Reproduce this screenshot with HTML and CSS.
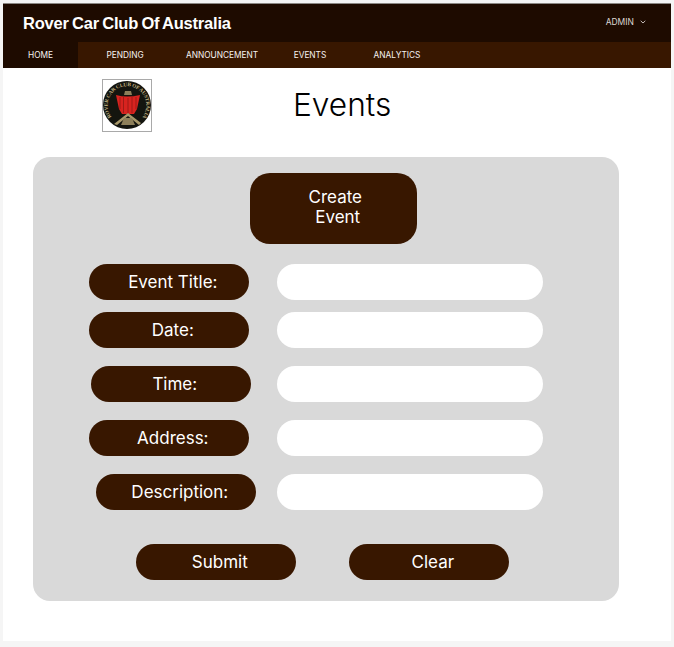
FILE: index.html
```html
<!DOCTYPE html>
<html lang="en">
<head>
<meta charset="utf-8">
<title>Events</title>
<link rel="stylesheet" href="styles.css">
</head>
<body>
<div class="frame">
  <header class="topbar">
    <span class="brand">Rover Car Club Of Australia</span>
    <span class="admin">ADMIN
      <svg class="chev" width="6" height="4" viewBox="0 0 6 4"><path d="M.7.8 3 3 5.300.8" fill="none" stroke="#d8d0cc" stroke-width=".9"/></svg>
    </span>
  </header>
  <nav class="nav">
    <a class="tab tab-home">HOME</a>
    <a class="tab tab-pending">PENDING</a>
    <a class="tab tab-ann">ANNOUNCEMENT</a>
    <a class="tab tab-events">EVENTS</a>
    <a class="tab tab-analytics">ANALYTICS</a>
  </nav>
  <div class="head">
    <div class="logo">
      <svg width="48" height="50" viewBox="0 0 48 50">
        <defs><path id="ring" d="M8.500 37a19.300 19.300 0 1 1 31 0"/></defs>
        <rect width="48" height="50" fill="#fff"/>
        <circle cx="24" cy="25" r="24" fill="#14150f"/>
        <text class="logo-text"><textPath href="#ring" textLength="85">ROVER CAR CLUB OF AUSTRALIA</textPath></text>
        <path d="M13 15q11 3 24 0l-3 14-3 5H19l-3-5z" fill="#d8231f"/>
        <path d="M17 17v12M20.500 17v16M25 18v16M29 17v16M33 17v12" stroke="#8a1712" stroke-width=".7"/>
        <path d="M22 11h6l1 4h-8z" fill="#8d7f5a"/>
        <path d="M11 44 25 33l13 10-2 2-11-9-11 9z" fill="#a8986a"/>
        <path d="M21 38h8l3 7H18z" fill="#8d7f5a"/>
      </svg>
    </div>
    <h1 class="title">Events</h1>
  </div>
  <main class="panel">
    <div class="create-row"><button class="create">Create<br>&nbsp;Event</button></div>
    <div class="row row-title"><span class="pill">Event Title:</span><span class="field"></span></div>
    <div class="row row-date"><span class="pill">Date:</span><span class="field"></span></div>
    <div class="row row-time"><span class="pill pill-time">Time:</span><span class="field field-time"></span></div>
    <div class="row row-address"><span class="pill">Address:</span><span class="field"></span></div>
    <div class="row row-desc"><span class="pill pill-desc">Description:</span><span class="field field-desc"></span></div>
    <div class="actions"><button class="pill">Submit</button><button class="pill">Clear</button></div>
  </main>
</div>
</body>
</html>
```
FILE: styles.css
```css
* { box-sizing: border-box; }
html, body { margin: 0; height: 647px; overflow: hidden; background: #f5f5f5; }
body { padding: 3px 3px 6px; font-family: Inter, "Liberation Sans", sans-serif; }
.frame { height: 638px; background: #fff; display: flex; flex-direction: column; }
.topbar {
  height: 39px; background: #1e0b00; border-top: 1px solid #8c8884; display: flex; align-items: center;
  justify-content: space-between; padding: 0 25px 0 20px;
}
.brand { color: #fff; font: 700 16.500px "Liberation Sans", Arial, sans-serif; letter-spacing: -.2px; word-spacing: -1.100px; }
.admin { color: #dcd6d2; font-size: 8.500px; display: flex; align-items: center; gap: 6px; margin-bottom: 2px; }
.chev { display: block; }
.nav { height: 26px; background: #381700; display: flex; align-items: center; }
.tab { color: #f6f2f0; font-size: 8.300px; line-height: 26px; text-align: center; }
.tab-home { width: 75px; background: #1e0b00; }
.tab-pending { width: 94px; }
.tab-ann { width: 94px; margin-left: 3px; }
.tab-events { width: 62px; margin-left: 10px; }
.tab-analytics { width: 62px; margin-left: 25px; }
.head { height: 89px; position: relative; padding: 11px 0 0 99px; }
.logo { width: 50px; height: 53px; border: 1px solid #a9a9a9; display: block; }
.logo svg { display: block; }
.logo-text { font: 700 5.300px "Liberation Serif", serif; fill: #c0b080; }
.title { position: absolute; left: 290px; top: 15px; margin: 0; font-size: 31.700px; line-height: 44px; font-weight: 300; color: #000; }
.panel { width: 586px; height: 444px; margin-left: 30.300px; background: #d9d9d9; border-radius: 17px; padding-top: 16px; }
.create-row { padding-left: 217px; height: 71px; margin-bottom: 20px; }
.create {
  width: 167px; height: 71px; border: 0; border-radius: 20px; background: #381700; color: #fff;
  font: 400 17px/20px Inter, sans-serif; padding: 0 0 4px 3px;
}
.row { display: flex; height: 36px; padding-left: 56px; }
.row-date { margin-top: 12px; }
.row-time { margin-top: 18px; }
.row-address, .row-desc { margin-top: 18px; }
.pill {
  width: 160px; height: 36px; border: 0; padding: 0 0 0 7px; border-radius: 18px; background: #381700; color: #fff;
  font: 400 17px/36px Inter, sans-serif; text-align: center; display: block;
}
.pill-time { margin-left: 2px; }
.pill-desc { margin-left: 7px; }
.field { width: 266px; height: 36px; margin-left: 28px; background: #fff; border-radius: 18px; display: block; }
.field-time { margin-left: 26px; }
.field-desc { margin-left: 21px; }
.actions { display: flex; gap: 53px; padding-left: 103px; margin-top: 34px; }
```
